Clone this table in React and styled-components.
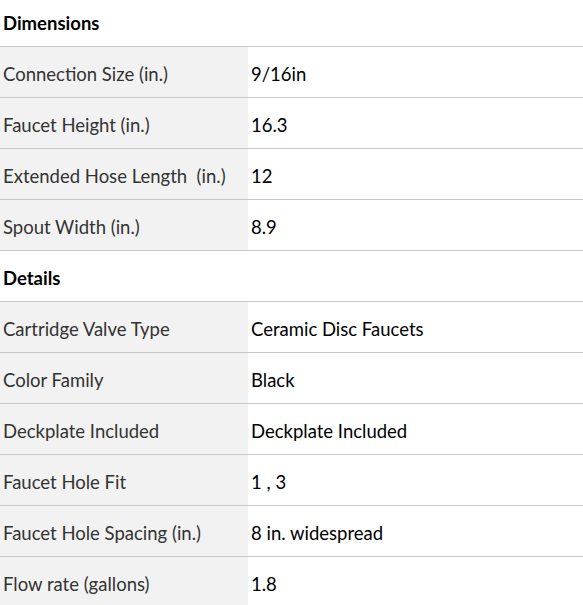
import styled, { createGlobalStyle } from 'styled-components';

const GlobalStyle = createGlobalStyle`
  body {
    margin: 0;
    background: #ffffff;
    font-family: 'Lato', 'Liberation Sans', sans-serif;
  }
`;

const sections = [
  {
    title: 'Dimensions',
    rows: [
      ['Connection Size (in.)', '9/16in'],
      ['Faucet Height (in.)', '16.3'],
      ['Extended Hose Length  (in.)', '12'],
      ['Spout Width (in.)', '8.9'],
    ],
  },
  {
    title: 'Details',
    rows: [
      ['Cartridge Valve Type', 'Ceramic Disc Faucets'],
      ['Color Family', 'Black'],
      ['Deckplate Included', 'Deckplate Included'],
      ['Faucet Hole Fit', '1 , 3'],
      ['Faucet Hole Spacing (in.)', '8 in. widespread'],
      ['Flow rate (gallons)', '1.8'],
    ],
  },
];

function App() {
  return (
    <>
      <GlobalStyle />
      <Table>
        {sections.map((section, i) => (
          <Section key={section.title}>
            <Heading first={i === 0}>{section.title}</Heading>
            {section.rows.map(([label, value]) => (
              <Row key={label}>
                <Label>{label}</Label>
                <Value>{value}</Value>
              </Row>
            ))}
          </Section>
        ))}
      </Table>
    </>
  );
}

export default App;

const Table = styled.div`
  width: 583px;
  display: flex;
  flex-direction: column;
`;

const Section = styled.div`
  display: flex;
  flex-direction: column;
`;

const Heading = styled.div`
  box-sizing: border-box;
  height: ${(p) => (p.first ? '46px' : '51px')};
  display: flex;
  align-items: center;
  padding: ${(p) => (p.first ? '0 3px' : '4px 3px 0')};
  border-top: ${(p) => (p.first ? 'none' : '1px solid #c8c8c8')};
  font-weight: 700;
  font-size: 18.5px;
  color: #000000;
`;

const Row = styled.div`
  box-sizing: border-box;
  height: 51px;
  display: grid;
  grid-template-columns: 248px 1fr;
  border-top: 1px solid #c8c8c8;
  font-size: 18.5px;
`;

const Label = styled.div`
  display: flex;
  align-items: center;
  padding: 4px 3px 0;
  background: #f2f2f2;
  color: #333333;
  white-space: pre;
`;

const Value = styled.div`
  display: flex;
  align-items: center;
  padding: 4px 3px 0;
  color: #000000;
`;
